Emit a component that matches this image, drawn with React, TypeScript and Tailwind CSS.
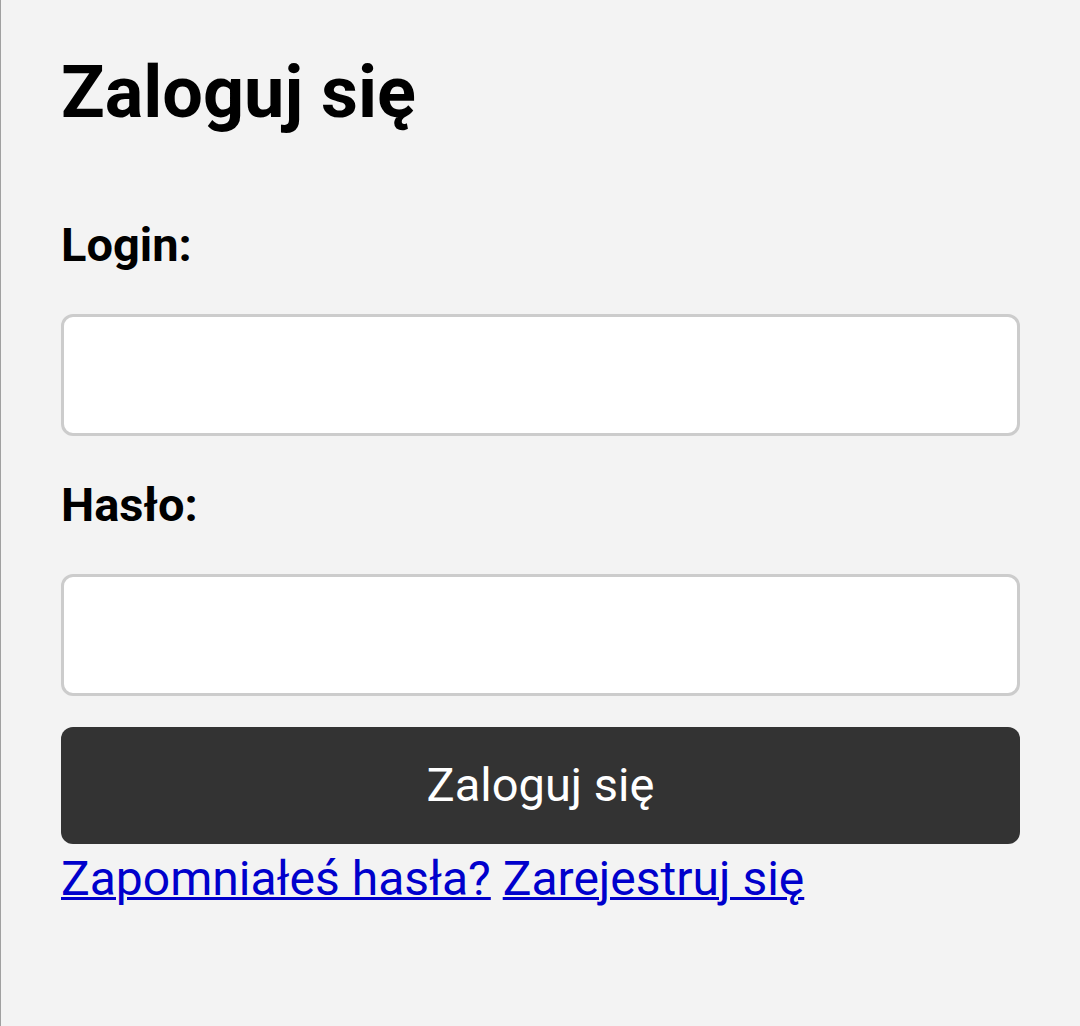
export default function App() {
  return (
    <div
      className="min-h-[1026px] w-[1080px] bg-[#f3f3f3] border-l border-[#a0a0a0] pl-[60px] pr-[60px] pt-[56px] text-black"
      style={{ fontFamily: "Roboto, 'Noto Sans', sans-serif" }}
    >
      <h1 className="text-[72px] leading-[73px] font-bold">Zaloguj się</h1>

      <form className="mt-[92px] flex flex-col">
        <label htmlFor="login" className="text-[47px] leading-[47px] font-bold">
          Login:
        </label>
        <input
          id="login"
          type="text"
          className="mt-[46px] h-[122px] w-full rounded-[12px] border-[3px] border-[#cccccc] bg-white"
        />

        <label htmlFor="haslo" className="mt-[45px] text-[47px] leading-[47px] font-bold">
          Hasło:
        </label>
        <input
          id="haslo"
          type="password"
          className="mt-[46px] h-[122px] w-full rounded-[12px] border-[3px] border-[#cccccc] bg-white"
        />

        <button
          type="button"
          className="mt-[31px] flex h-[117px] w-full items-center justify-center rounded-[12px] bg-[#333333] text-[47px] text-white"
        >
          Zaloguj się
        </button>
      </form>

      <div className="mt-[11px] text-[48px] leading-[48px] text-[#0000cc]">
        <a href="#" className="underline decoration-[3px]">
          Zapomniałeś hasła?
        </a>{" "}
        <a href="#" className="underline decoration-[3px]">
          Zarejestruj się
        </a>
      </div>
    </div>
  );
}
